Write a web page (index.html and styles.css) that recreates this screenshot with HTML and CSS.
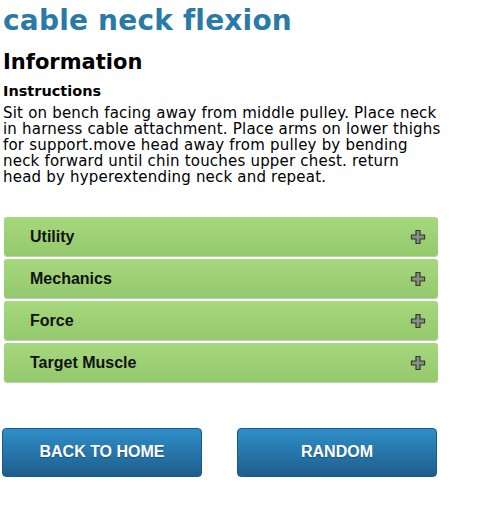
FILE: index.html
```html
<!DOCTYPE html>
<html>
<head>
<meta charset="utf-8">
<link rel="stylesheet" href="styles.css">
</head>
<body>
<div class="page">
  <h1 class="title">cable neck flexion</h1>
  <h2 class="section">Information</h2>
  <h3 class="sub">Instructions</h3>
  <p class="text">Sit on bench facing away from middle pulley. Place neck in harness cable attachment. Place arms on lower thighs for support.move head away from pulley by bending neck forward until chin touches upper chest. return<br>head by hyperextending neck and repeat.</p>
  <div class="accordion">
    <div class="acc-item"><span>Utility</span><svg class="plus" width="16" height="16" viewBox="0 0 16 16"><path d="M6 1.5h4v4.5h4.5v4H10v4.5H6V10H1.5V6H6z" fill="#8a8f86" stroke="#2e3a2a" stroke-width="1.2"/></svg></div>
    <div class="acc-item"><span>Mechanics</span><svg class="plus" width="16" height="16" viewBox="0 0 16 16"><path d="M6 1.5h4v4.5h4.5v4H10v4.5H6V10H1.5V6H6z" fill="#8a8f86" stroke="#2e3a2a" stroke-width="1.2"/></svg></div>
    <div class="acc-item"><span>Force</span><svg class="plus" width="16" height="16" viewBox="0 0 16 16"><path d="M6 1.5h4v4.5h4.5v4H10v4.5H6V10H1.5V6H6z" fill="#8a8f86" stroke="#2e3a2a" stroke-width="1.2"/></svg></div>
    <div class="acc-item"><span>Target Muscle</span><svg class="plus" width="16" height="16" viewBox="0 0 16 16"><path d="M6 1.5h4v4.5h4.5v4H10v4.5H6V10H1.5V6H6z" fill="#8a8f86" stroke="#2e3a2a" stroke-width="1.2"/></svg></div>
  </div>
  <div class="buttons">
    <a class="btn">BACK TO HOME</a>
    <a class="btn">RANDOM</a>
  </div>
</div>
</body>
</html>
```
FILE: styles.css
```css
html, body { margin: 0; padding: 0; background: #fff; }
body { font-family: "DejaVu Sans", sans-serif; color: #000; }
.page { padding: 0 0 0 3px; width: 442px; }
.title { margin: 0; padding-top: 4px; font-size: 28px; line-height: 34px; font-weight: bold; color: #2a79a6; letter-spacing: 0.2px; }
.section { margin: 11px 0 0; font-size: 21px; line-height: 26px; font-weight: bold; }
.sub { margin: 7px 0 0; font-size: 14.5px; line-height: 18px; font-weight: bold; }
.text { margin: 5px 0 0; font-size: 15px; line-height: 16px; letter-spacing: 0.2px; }
.accordion { margin-top: 32px; margin-left: 1px; display: flex; flex-direction: column; gap: 3px; width: 434px; }
.acc-item { height: 39px; box-sizing: border-box; border-radius: 3px; background: linear-gradient(#a6d87e, #95c96d); display: flex; align-items: center; justify-content: space-between; padding: 0 12px 0 26px; font-family: "Liberation Sans", Arial, sans-serif; font-weight: bold; font-size: 16px; color: #111; box-shadow: 0 1px 1px rgba(80,120,50,0.4); }
.plus { display: block; }
.buttons { margin-top: 46px; margin-left: -1px; display: flex; gap: 35px; }
.btn { width: 200px; height: 49px; box-sizing: border-box; border-radius: 4px; background: linear-gradient(#2f8fc9, #1e5d8c); border: 1px solid #1b5a86; color: #fff; font-family: "Liberation Sans", Arial, sans-serif; font-weight: bold; font-size: 16px; display: flex; align-items: center; justify-content: center; padding-bottom: 2px; text-shadow: 0 1px 1px rgba(0,0,0,0.3); }
```
